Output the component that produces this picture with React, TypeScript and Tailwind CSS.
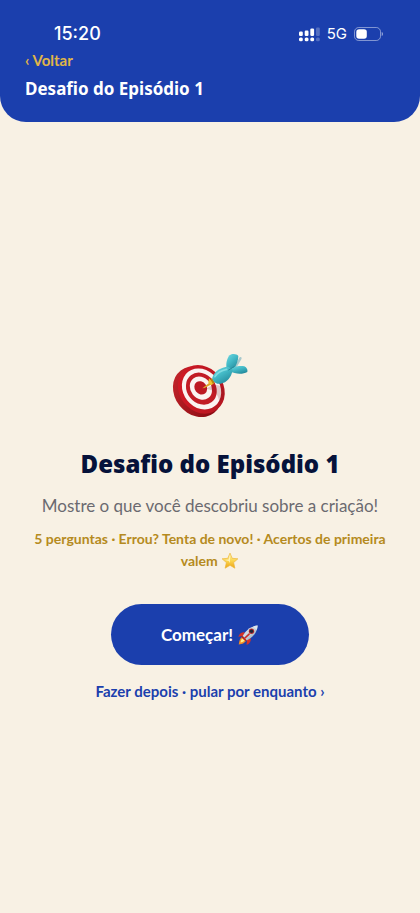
const episode = {
  title: 'Desafio do Episódio 1',
  description: 'Mostre o que você descobriu sobre a criação!',
  hint: '5 perguntas · Errou? Tenta de novo! · Acertos de primeira valem',
};

function SignalIcon() {
  return (
    <svg viewBox="0 0 21 15" className="h-[15px] w-[21px]" fill="#fff" aria-hidden="true">
      <rect x="0" y="4.5" width="3.8" height="4.5" rx="1.2" />
      <rect x="0" y="10.4" width="3.8" height="3.8" rx="1.5" />
      <rect x="5.7" y="3.5" width="3.8" height="5.5" rx="1.2" />
      <rect x="5.7" y="10.4" width="3.8" height="3.8" rx="1.5" />
      <rect x="11.3" y="1.5" width="3.8" height="7.5" rx="1.2" />
      <rect x="11.3" y="10.4" width="3.8" height="3.8" rx="1.5" />
      <g opacity="0.25">
        <rect x="17" y="0.5" width="3.8" height="8.5" rx="1.2" />
        <rect x="17" y="10.4" width="3.8" height="3.8" rx="1.5" />
      </g>
    </svg>
  );
}

function BatteryIcon() {
  return (
    <svg viewBox="0 0 29 14" className="h-[14px] w-[29px]" fill="none" aria-hidden="true">
      <rect x="0.5" y="0.5" width="26" height="13" rx="4.2" stroke="#fff" strokeOpacity="0.45" />
      <rect x="2.3" y="2.2" width="10.5" height="9.6" rx="2.8" fill="#fff" />
      <path d="M27.7 5v4c.9-.4 1.3-1.1 1.3-2s-.4-1.6-1.3-2Z" fill="#fff" fillOpacity="0.5" />
    </svg>
  );
}

function TargetIcon() {
  return (
    <svg viewBox="0 0 96 96" className="h-24 w-24" role="img" aria-label="Alvo">
      <defs>
        <linearGradient id="rim" x1="0" y1="0" x2="0.4" y2="1">
          <stop offset="0" stopColor="#c8262c" />
          <stop offset="1" stopColor="#8c0d14" />
        </linearGradient>
        <linearGradient id="face" x1="0" y1="0" x2="1" y2="1">
          <stop offset="0" stopColor="#d51a26" />
          <stop offset="1" stopColor="#b01620" />
        </linearGradient>
        <linearGradient id="dart" x1="0" y1="0" x2="0.7" y2="1">
          <stop offset="0" stopColor="#72dbe3" />
          <stop offset="0.5" stopColor="#43b9c6" />
          <stop offset="1" stopColor="#238a9c" />
        </linearGradient>
      </defs>
      <g transform="translate(-2 9) scale(0.3333)">
        <ellipse cx="112" cy="152" rx="68" ry="81" transform="rotate(-38 112 152)" fill="url(#rim)" />
        <ellipse cx="124" cy="145" rx="66" ry="77" transform="rotate(-38 124 145)" fill="url(#face)" />
        <g transform="rotate(-38 124 143)">
          <ellipse cx="124" cy="144" rx="55" ry="65" fill="#fbf3f1" />
          <ellipse cx="124" cy="143" rx="43" ry="51" fill="#c21c26" />
          <ellipse cx="124" cy="141" rx="31" ry="37" fill="#fbf3f1" />
          <ellipse cx="124" cy="140" rx="18" ry="21" fill="#bd1823" />
        </g>
        <path d="M138 143c20-13 42-17 53 3 4 18-3 32-13 38-2-22-12-36-40-41Z" fill="#7b1720" opacity="0.2" />
        <path d="m127 142 24-19 5 6-22 12Z" fill="#dda52b" />
        <path d="m147 112 15 15-8 6-9-8Z" fill="#eec22f" />
        <path d="m151 114 6-2 7 12-5 6Z" fill="#b78310" />
        <path d="m222 78 17-29c4-2 8 1 5 6l-16 27Z" fill="#a8c9cc" />
        <path d="M200 84c-3-14 0-32 9-41 7-6 21-5 26 2 0 15-6 27-15 43Z" fill="url(#dart)" />
        <path d="M207 85c8-5 30-13 46-9 7 3 11 11 9 17-14 8-35 7-54-2Z" fill="url(#dart)" />
        <path d="M158 107c6-16 24-29 47-30l13 9c-4 24-17 38-36 42-9 2-18-2-22-9-3-4-4-9-2-12Z" fill="url(#dart)" />
        <path d="M165 107c7-12 20-19 35-22" fill="none" stroke="#a1eef0" strokeWidth="5" strokeLinecap="round" opacity="0.6" />
        <path d="m206 87 15-9" stroke="#268596" strokeWidth="3" strokeLinecap="round" />
      </g>
    </svg>
  );
}

function StarIcon() {
  return (
    <svg viewBox="0 0 18 18" className="inline-block h-[18px] w-[18px] align-[-4px]" role="img" aria-label="estrela">
      <defs>
        <linearGradient id="star" x1="0" y1="0" x2="0" y2="1">
          <stop offset="0" stopColor="#fff3b0" />
          <stop offset="0.5" stopColor="#fbd650" />
          <stop offset="1" stopColor="#eda416" />
        </linearGradient>
      </defs>
      <path
        d="M9 1.1 11.2 6.3l5.7.5-4.3 3.8 1.3 5.6L9 13.3l-4.9 2.900 1.300-5.600L1.100 6.800l5.700-.5Z"
        fill="url(#star)"
        stroke="#edb63b"
        strokeWidth="0.7"
        strokeLinejoin="round"
      />
      <path d="m9 3-1.3 4.500L4 8l3.700 1L9 11Z" fill="#fffbe0" opacity="0.7" />
    </svg>
  );
}

function RocketIcon() {
  return (
    <svg viewBox="0 0 24 24" className="h-[22px] w-[22px]" aria-hidden="true">
      <defs>
        <linearGradient id="body" x1="0" y1="0" x2="1" y2="1">
          <stop offset="0" stopColor="#f3f7f9" />
          <stop offset="0.5" stopColor="#c8d3dc" />
          <stop offset="1" stopColor="#7f93a6" />
        </linearGradient>
      </defs>
      <path d="M8.5 9.200C5.500 8.700 3 10.200 1.300 13.800l5.700-.7Z" fill="#d43227" />
      <path d="M15 15.600c.5 3-.9 5.600-4.500 7.300l.4-6Z" fill="#d43227" />
      <path d="M6.200 13.700c-2.900 1.300-3.700 4.600-4.300 8.700 3.900-.7 7.200-1.700 8.100-5Z" fill="#f28b25" />
      <path d="M6.900 14.700c-1.900 1.100-2.500 3-3.200 5.600 2.500-.5 4.500-1.300 5.300-3.400Z" fill="#fff18a" />
      <path d="M6.200 13.200C9 7.500 14.200 2.500 22.500 1.500c-.7 8-5.100 13.200-11.900 16.400Z" fill="url(#body)" />
      <path d="M17.600 2.700c1.500-.6 3.200-1 4.900-1.200-.1 1.900-.5 3.500-1.100 5.100Z" fill="#dce5ed" />
      <path d="m6.200 13.200 4.400 4.700-1.600.7-4.100-4Z" fill="#b4231f" />
      <circle cx="15.8" cy="7.9" r="2.9" fill="#b82b2a" />
      <circle cx="15.8" cy="7.9" r="1.9" fill="#202638" />
      <path d="m7.800 16.100 5.400-5.100" stroke="#ca2e28" strokeWidth="1.7" strokeLinecap="round" />
    </svg>
  );
}

export default function App() {
  return (
    <div className="flex min-h-screen flex-col bg-[#f8f1e4] font-['Lato',sans-serif]">
      <header className="rounded-b-[26px] bg-[#1b3fad] px-[25px] pt-5 pb-5">
        {/* Status bar */}
        <div className="flex h-7 items-center justify-between pr-3 pl-[29px] font-['Inter',sans-serif] text-white">
          <span className="text-lg font-medium">15:20</span>
          <div className="flex items-center gap-[7px]">
            <SignalIcon />
            <span className="text-[15px]">5G</span>
            <BatteryIcon />
          </div>
        </div>

        <button type="button" className="block text-[15px] leading-6 font-bold text-[#e0b648]">
          ‹ Voltar
        </button>
        <p className="mt-1 font-['Noto_Sans',sans-serif] text-[17px] leading-[26px] font-bold text-white">
          {episode.title}
        </p>
      </header>

      <main className="flex flex-1 flex-col items-center justify-center px-6 text-center">
        <TargetIcon />
        <h1 className="mt-4 font-['Noto_Sans',sans-serif] text-2xl leading-10 font-black text-[#06123a]">
          {episode.title}
        </h1>
        <p className="mt-2 text-[17px] leading-7 text-[#6b6a70]">{episode.description}</p>
        <p className="mt-2 text-sm leading-[22px] font-bold text-[#b58a20]">
          {episode.hint} <StarIcon />
        </p>

        <button
          type="button"
          className="mt-8 flex h-[61px] items-center gap-1 rounded-full bg-[#1b3fad] px-[50px] text-[17px] font-bold text-white"
        >
          Começar! <RocketIcon />
        </button>
        <button type="button" className="mt-3.5 text-[15px] leading-6 font-bold text-[#1b3fad]">
          Fazer depois · pular por enquanto ›
        </button>
      </main>
    </div>
  );
}
